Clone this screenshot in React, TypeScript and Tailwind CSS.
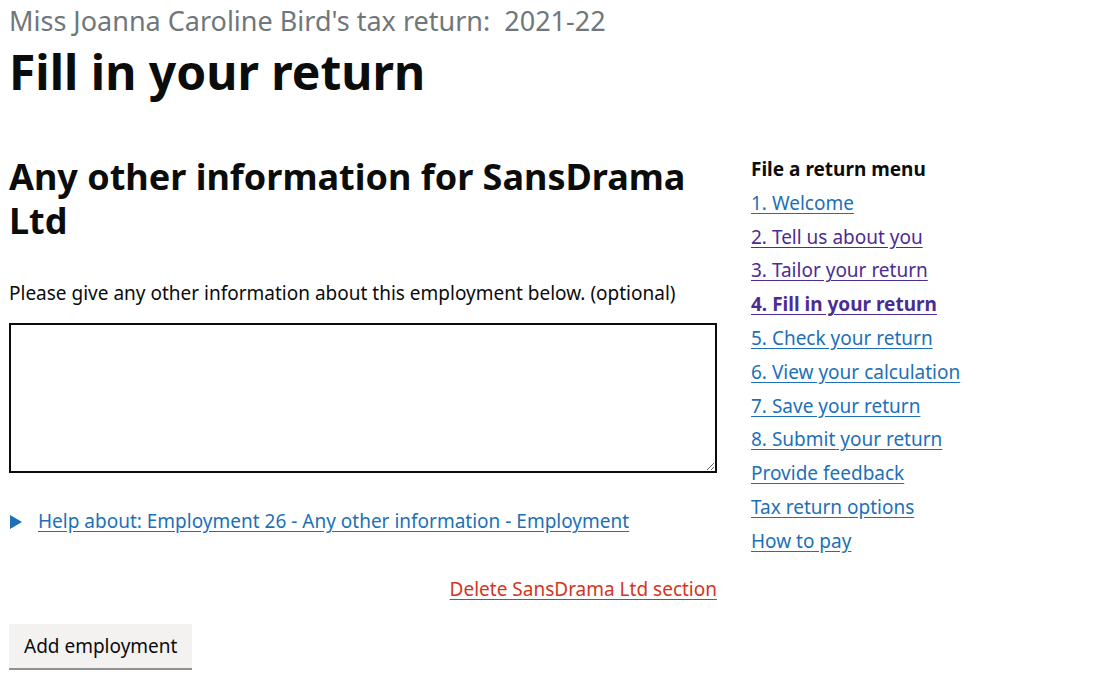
import React from "react";

const menu: { label: string; visited?: boolean; current?: boolean }[] = [
  { label: "1. Welcome" },
  { label: "2. Tell us about you", visited: true },
  { label: "3. Tailor your return", visited: true },
  { label: "4. Fill in your return", visited: true, current: true },
  { label: "5. Check your return" },
  { label: "6. View your calculation" },
  { label: "7. Save your return" },
  { label: "8. Submit your return" },
  { label: "Provide feedback" },
  { label: "Tax return options" },
  { label: "How to pay" },
];

export default function App() {
  return (
    <div
      className="min-h-[680px] w-[1108px] bg-white text-[#0b0c0c]"
      style={{ fontFamily: "'Noto Sans', Arial, sans-serif" }}
    >
      <div className="px-[9px] pt-[5px]">
        <div className="text-[27px] leading-[32px] text-[#6f777b]">
          Miss Joanna Caroline Bird's tax return:&nbsp; 2021-22
        </div>
        <h1 className="mt-[5px] text-[48px] font-bold leading-[60px]">Fill in your return</h1>
      </div>
      <div className="flex px-[9px] pt-[47px]">
        <div className="w-[708px] pt-[6px]">
          <h2 className="text-[36px] font-bold leading-[44px]">
            Any other information for SansDrama Ltd
          </h2>
          <p className="mt-[38px] text-[19px] leading-[25px]">
            Please give any other information about this employment below. (optional)
          </p>
          <textarea className="mt-[17px] block h-[150px] w-[708px] border-2 border-[#0b0c0c] p-[5px]" />
          <div className="mt-[36px] flex items-center gap-[16px]">
            <svg width="12" height="14" viewBox="0 0 12 14" className="ml-[1px]">
              <path d="M0 0 L12 7 L0 14 Z" fill="#1d70b8" />
            </svg>
            <a className="text-[19px] leading-[25px] text-[#1d70b8] underline underline-offset-[3px]" href="#">
              Help about: Employment 26 - Any other information - Employment
            </a>
          </div>
          <div className="mt-[43px] flex justify-end">
            <a className="text-[19px] leading-[25px] text-[#d4351c] underline underline-offset-[3px]" href="#">
              Delete SansDrama Ltd section
            </a>
          </div>
          <button className="mt-[22px] bg-[#f3f2f1] px-[15px] pb-[9px] pt-[10px] text-[19px] leading-[25px] shadow-[0_2px_0_#929191]">
            Add employment
          </button>
        </div>
        <div className="ml-[34px] pt-[4px]">
          <div className="text-[19px] font-bold leading-[33.8px]">File a return menu</div>
          <ul className="flex flex-col">
            {menu.map((m) => (
              <li key={m.label} className="text-[19px] leading-[33.8px]">
                <a
                  href="#"
                  className={
                    "underline underline-offset-[3px] " +
                    (m.visited ? "text-[#4c2c92] " : "text-[#1d70b8] ") +
                    (m.current ? "font-bold" : "")
                  }
                >
                  {m.label}
                </a>
              </li>
            ))}
          </ul>
        </div>
      </div>
    </div>
  );
}
